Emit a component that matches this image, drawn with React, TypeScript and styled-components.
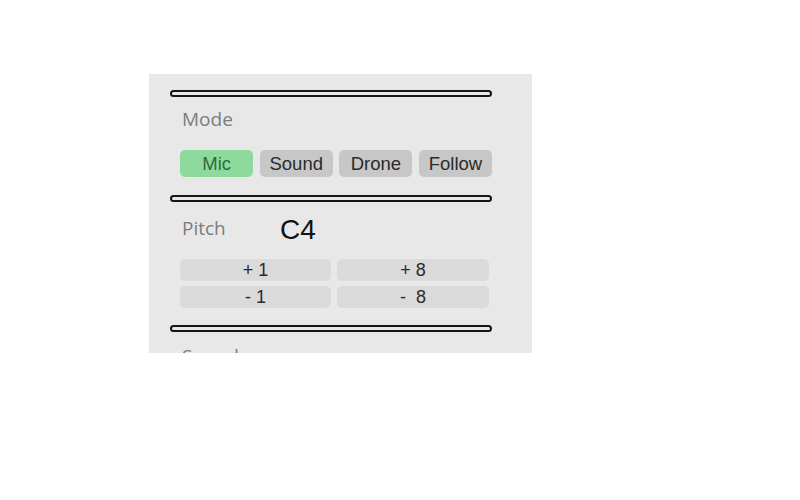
import React from "react";
import styled, { createGlobalStyle } from "styled-components";

const Global = createGlobalStyle`
  html, body { margin: 0; padding: 0; background: #ffffff; }
  body { font-family: "Liberation Sans", Arial, sans-serif; }
`;

const Page = styled.div`
  padding: 74px 0 0 149px;
`;

const Panel = styled.div`
  width: 383px;
  height: 279px;
  background: #e8e8e8;
  overflow: hidden;
  display: flex;
  flex-direction: column;
  padding-top: 16px;
  box-sizing: border-box;
`;

const Divider = styled.div`
  margin-left: 21px;
  width: 322px;
  height: 7px;
  box-sizing: border-box;
  border: 2px solid #151515;
  border-radius: 4px;
  flex-shrink: 0;
`;

const Section = styled.section<{ $top: number; $bottom: number; $gap: number }>`
  display: flex;
  flex-direction: column;
  gap: ${(p) => p.$gap}px;
  padding: ${(p) => p.$top}px 0 ${(p) => p.$bottom}px 31px;
  flex-shrink: 0;
`;

const Label = styled.div`
  font-family: "Open Sans", "Noto Sans", sans-serif;
  font-size: 19px;
  line-height: 24px;
  color: #7c7c7c;
  padding-left: 2px;
`;

const ModeRow = styled.div`
  display: flex;
  gap: 6.3px;
`;

const ModeButton = styled.button<{ $active?: boolean }>`
  width: 73.3px;
  height: 27px;
  border: none;
  border-radius: 5px;
  padding: 0;
  font-family: "Liberation Sans", Arial, sans-serif;
  font-size: 18.5px;
  line-height: 27px;
  background: ${(p) => (p.$active ? "#8dda9c" : "#c7c7c7")};
  color: ${(p) => (p.$active ? "#2f6c3c" : "#2a2a2a")};
  cursor: pointer;
`;

const PitchRow = styled.div`
  display: flex;
  align-items: flex-start;
`;

const PitchLabel = styled(Label)`
  width: 98px;
  padding-top: 2px;
`;

const PitchValue = styled.div`
  font-family: "Liberation Sans", Arial, sans-serif;
  font-size: 28px;
  line-height: 32px;
  color: #111;
`;

const StepGrid = styled.div`
  display: grid;
  grid-template-columns: 151px 152px;
  column-gap: 6px;
  row-gap: 5px;
`;

const StepButton = styled.button`
  height: 22px;
  border: none;
  border-radius: 5px;
  padding: 0;
  background: #dadada;
  color: #2a2a2a;
  font-family: "Liberation Sans", Arial, sans-serif;
  font-size: 18px;
  line-height: 22px;
  white-space: pre;
  cursor: pointer;
`;

export default function App() {
  const modes = ["Mic", "Sound", "Drone", "Follow"];
  const steps = ["+ 1", "+ 8", "- 1", "-  8"];
  return (
    <>
      <Global />
      <Page>
        <Panel>
          <Divider />
          <Section $top={10} $bottom={18} $gap={19}>
            <Label>Mode</Label>
            <ModeRow>
              {modes.map((m) => (
                <ModeButton key={m} $active={m === "Mic"}>
                  {m}
                </ModeButton>
              ))}
            </ModeRow>
          </Section>
          <Divider />
          <Section $top={12} $bottom={17} $gap={13}>
            <PitchRow>
              <PitchLabel>Pitch</PitchLabel>
              <PitchValue>C4</PitchValue>
            </PitchRow>
            <StepGrid>
              {steps.map((s) => (
                <StepButton key={s}>{s}</StepButton>
              ))}
            </StepGrid>
          </Section>
          <Divider />
          <Section $top={12} $bottom={0} $gap={0}>
            <Label>Sound</Label>
          </Section>
        </Panel>
      </Page>
    </>
  );
}
